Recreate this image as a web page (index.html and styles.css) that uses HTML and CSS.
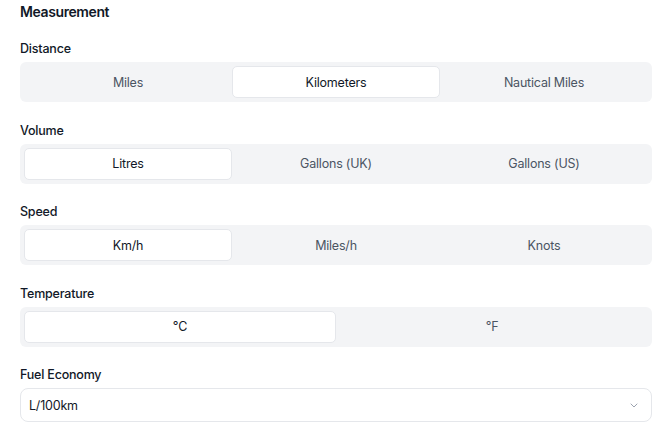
FILE: index.html
```html
<!DOCTYPE html>
<html lang="en">
  <head>
    <meta charset="UTF-8" />
    <title>Measurement</title>
    <link rel="stylesheet" href="styles.css">
  </head>
  <body>
    <main class="settings">
      <h2 class="settings-title">Measurement</h2>

      <section class="field">
        <div class="field-label">Distance</div>
        <div class="segmented">
          <button class="segment">Miles</button>
          <button class="segment active">Kilometers</button>
          <button class="segment">Nautical Miles</button>
        </div>
      </section>

      <section class="field">
        <div class="field-label">Volume</div>
        <div class="segmented">
          <button class="segment active">Litres</button>
          <button class="segment">Gallons (UK)</button>
          <button class="segment">Gallons (US)</button>
        </div>
      </section>

      <section class="field">
        <div class="field-label">Speed</div>
        <div class="segmented">
          <button class="segment active">Km/h</button>
          <button class="segment">Miles/h</button>
          <button class="segment">Knots</button>
        </div>
      </section>

      <section class="field">
        <div class="field-label">Temperature</div>
        <div class="segmented two">
          <button class="segment active">&deg;C</button>
          <button class="segment">&deg;F</button>
        </div>
      </section>

      <section class="field">
        <div class="field-label">Fuel Economy</div>
        <div class="select">
          <span>L/100km</span>
          <svg class="chevron" width="10" height="10" viewBox="0 0 10 10">
            <path d="M2 4l3 3 3-3" fill="none" stroke="#9ca3af" stroke-width="1" stroke-linecap="round" stroke-linejoin="round" />
          </svg>
        </div>
      </section>
    </main>
  </body>
</html>
```

FILE: styles.css
```css
html,
body {
  margin: 0;
  padding: 0;
  background: #fff;
  font-family: "Inter", "Noto Sans", sans-serif;
  color: #111827;
}
.settings {
  width: 632px;
  padding: 1px 0 0 20px;
}
.settings-title {
  margin: 2px 0 0 0;
  font-size: 14px;
  font-weight: 600;
  letter-spacing: -0.4px;
  line-height: 18px;
}
.field {
  margin-top: 19px;
}
.field + .field {
  margin-top: 19.5px;
}
.field-label {
  font-size: 12.5px;
  font-weight: 500;
  letter-spacing: -0.2px;
  line-height: 18px;
  margin-bottom: 4px;
}
.segmented {
  display: grid;
  grid-template-columns: repeat(3, 1fr);
  padding: 4px;
  background: #f3f4f6;
  border-radius: 6px;
}
.segmented.two {
  grid-template-columns: repeat(2, 1fr);
}
.segment {
  height: 32px;
  border: 1px solid transparent;
  border-radius: 5px;
  background: transparent;
  font-family: inherit;
  font-size: 12.5px;
  letter-spacing: -0.2px;
  color: #4b5563;
  padding: 0;
  cursor: pointer;
}
.segment.active {
  background: #fff;
  border-color: #e5e7eb;
  color: #111827;
}
.select {
  display: flex;
  align-items: center;
  justify-content: space-between;
  height: 32px;
  padding: 0 12px 0 8px;
  border: 1px solid #e5e7eb;
  border-radius: 8px;
  font-size: 12.5px;
  letter-spacing: -0.2px;
  color: #111827;
}
```
